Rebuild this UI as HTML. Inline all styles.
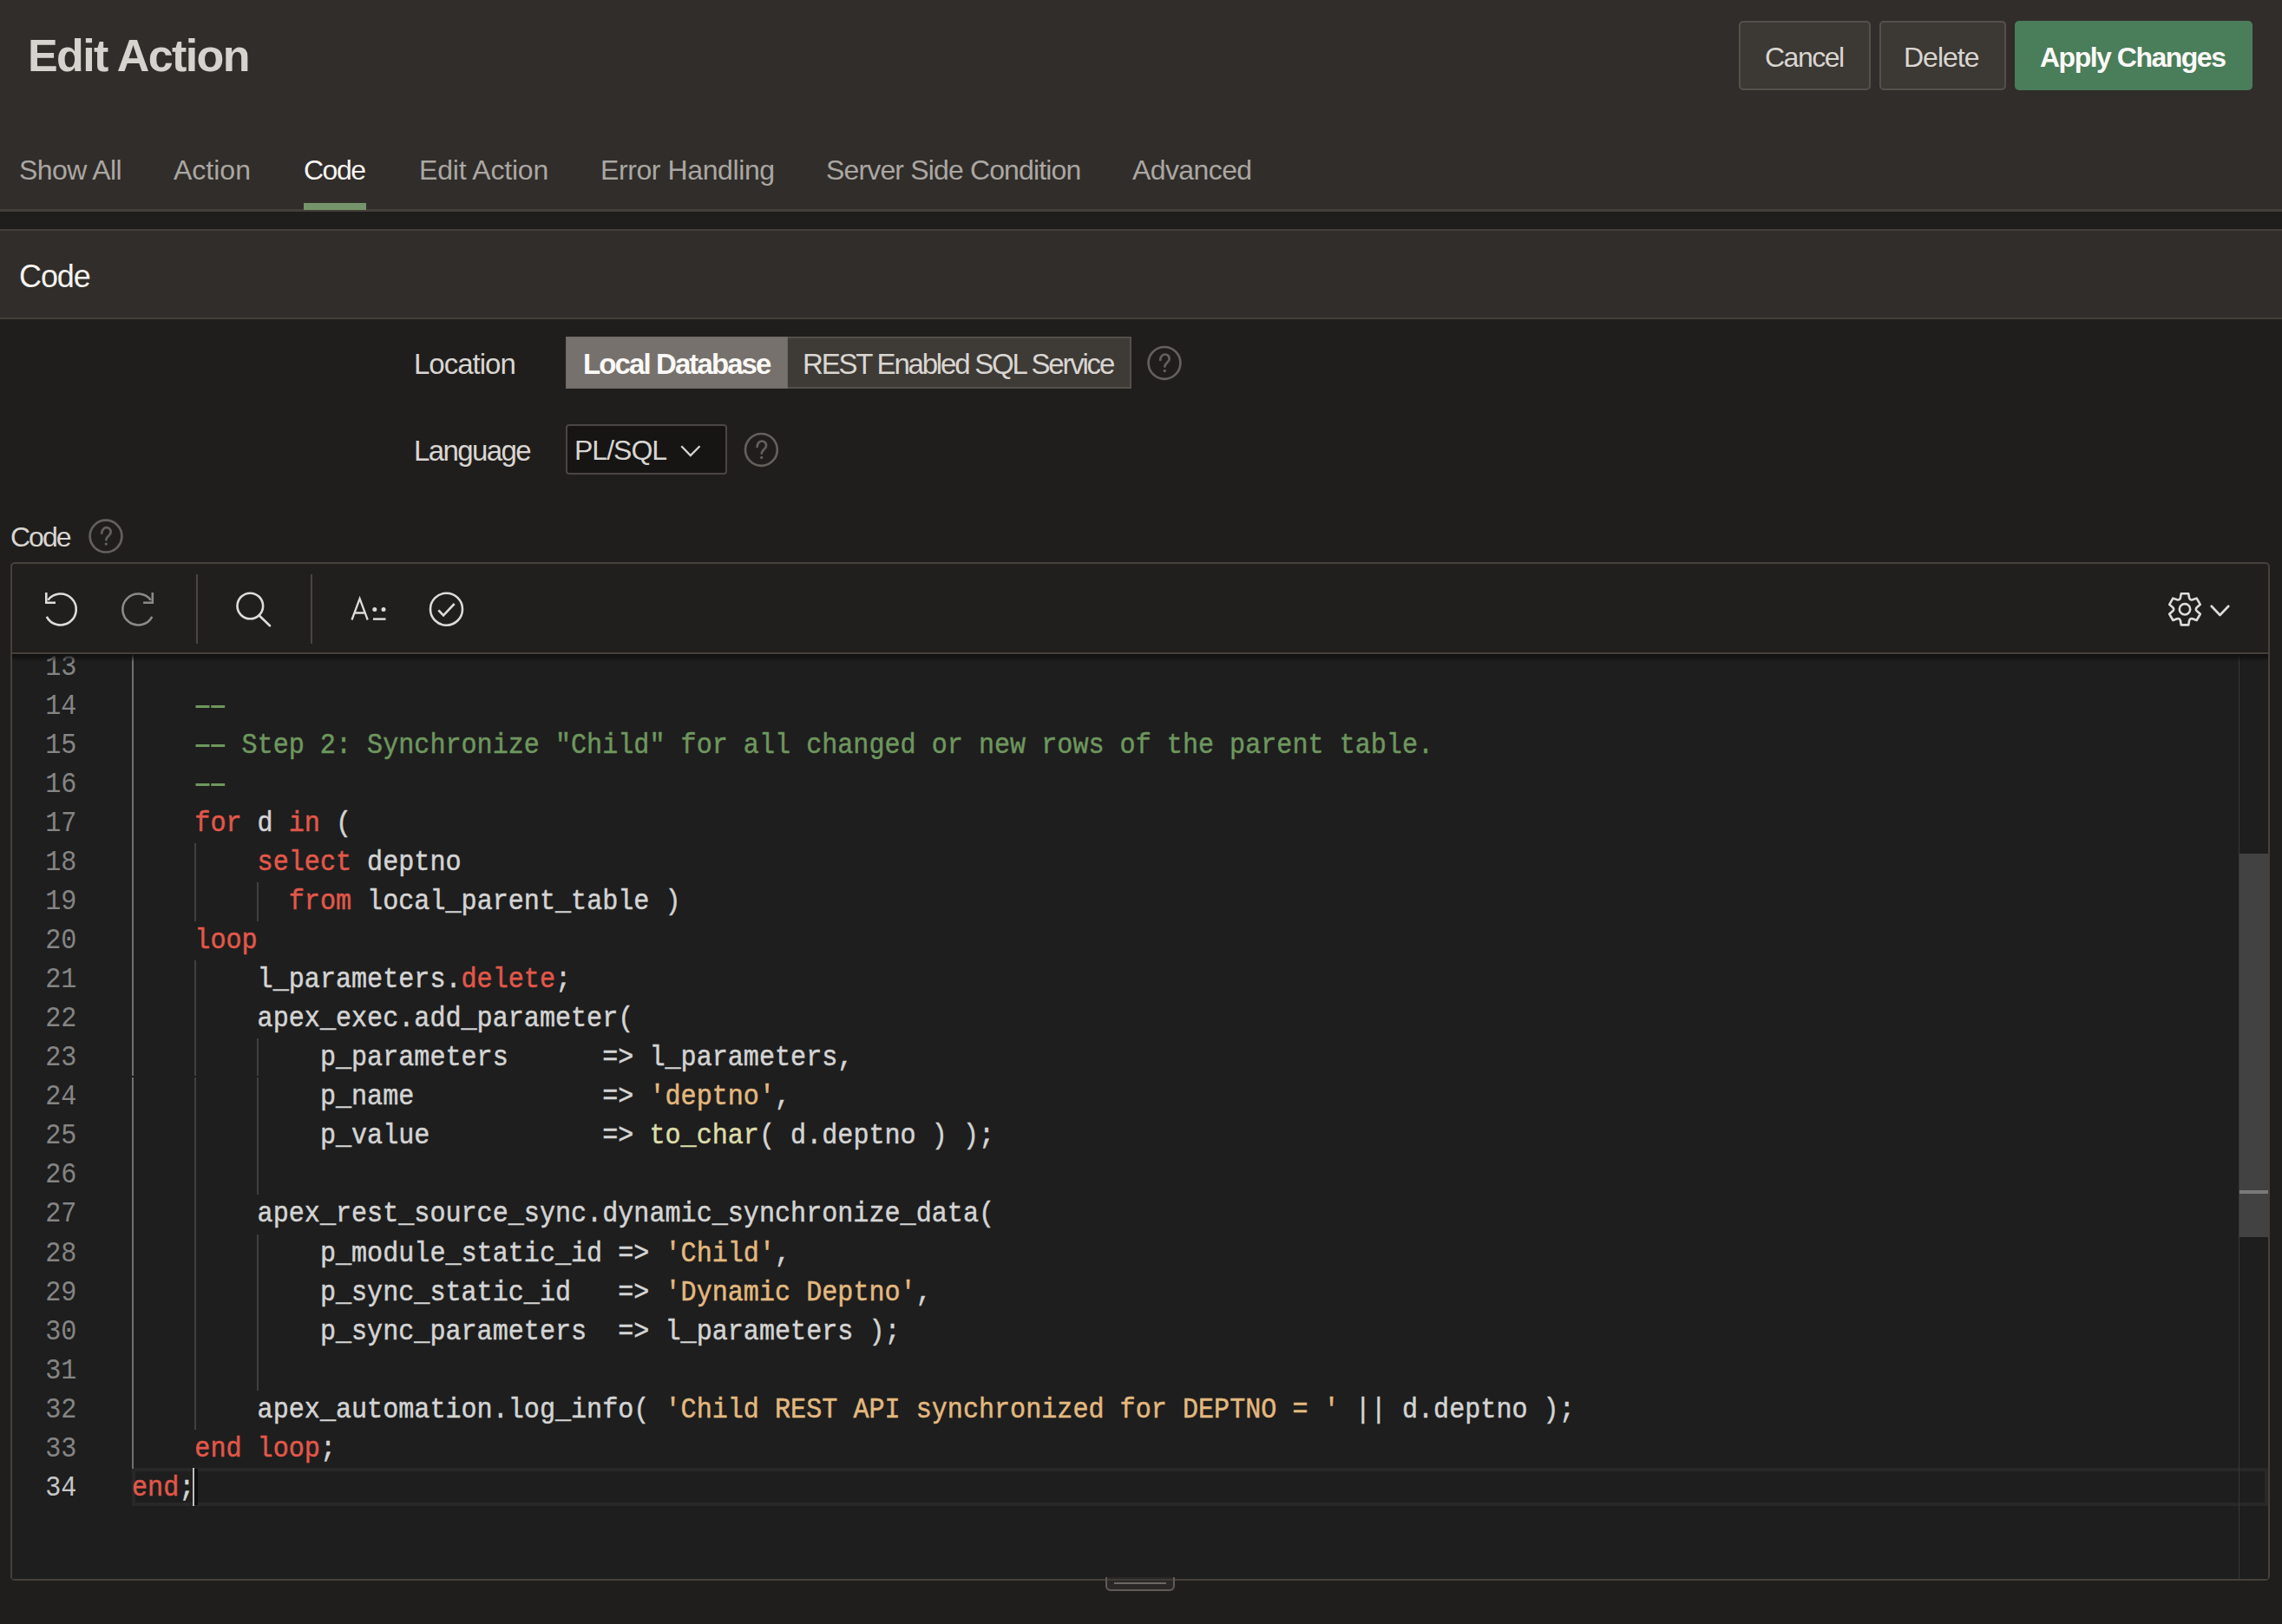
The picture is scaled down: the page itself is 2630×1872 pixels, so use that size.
<!DOCTYPE html>
<html><head><meta charset="utf-8">
<style>
*{box-sizing:border-box;margin:0;padding:0}
html,body{width:2630px;height:1872px;overflow:hidden;background:#201e1c;font-family:"Liberation Sans",sans-serif;}
.abs{position:absolute}
#hdr{position:absolute;left:0;top:0;width:2630px;height:244px;background:#312d2a;border-bottom:3px solid #433f39}
.t{position:absolute;white-space:pre;line-height:1}
.btn{position:absolute;top:24px;height:80px;border-radius:5px}
.gray{background:#3c3834;border:2px solid #55504b}
.tab{color:#aaa7a3;font-size:32px;letter-spacing:-0.6px}
#rh{position:absolute;left:0;top:264px;width:2630px;height:104px;background:#312d2a;border-top:2px solid #433f39;border-bottom:2px solid #433f39}
.lbl{color:#d9d6d2;font-size:32px;letter-spacing:-0.5px}
.help{position:absolute;width:40px;height:40px;border:2px solid #5f5b57;border-radius:50%}
#ed{position:absolute;left:12px;top:648px;width:2604px;height:1174px;border:2px solid #45413b;border-radius:5px;background:#201f1d}
#tb{position:absolute;left:0;top:0;width:2600px;height:104px;border-bottom:2px solid #45413b}
#code{position:absolute;left:0;top:104px;width:2600px;height:1066px;background:#1e1e1e;overflow:hidden;--x0:138px}
.ln{position:absolute;left:0;width:84px;height:45px;line-height:45px;padding-top:0px;text-align:right;font-family:"Liberation Mono",monospace;font-size:34px;transform:scaleX(0.8858);transform-origin:0 0;color:#858585;white-space:pre}
.ln.act{color:#c6c6c6}
.cl{position:absolute;left:var(--x0);height:45px;line-height:45px;padding-top:0px;font-family:"Liberation Mono",monospace;font-size:34px;transform:scaleX(0.8858);transform-origin:0 0;color:#d4d4d4;-webkit-text-stroke:0.5px currentColor;white-space:pre}
.k{color:#e2584a}.c{color:#6e975e}.s{color:#e3b97f}.f{color:#dcdcaa}
.dsh{display:inline-block;width:20.4px;height:45px;vertical-align:top;position:relative;color:transparent;-webkit-text-stroke:0}
.dsh::after{content:"";position:absolute;left:1.1px;right:1.1px;top:21.5px;height:3px;background:#6e975e}
.g{position:absolute;width:2px;background:#404040}
.g.ga{background:#707070}
</style></head>
<body>
<div id="hdr">
  <div class="t" style="left:32px;top:38px;font-size:52px;font-weight:bold;color:#d6d3cf;letter-spacing:-1.6px">Edit Action</div>
  <div class="btn gray" style="left:2004px;width:152px"></div>
  <div class="t" style="left:2034px;top:50px;font-size:32px;color:#d9d6d2;letter-spacing:-1.5px">Cancel</div>
  <div class="btn gray" style="left:2166px;width:146px"></div>
  <div class="t" style="left:2194px;top:50px;font-size:32px;color:#d9d6d2;letter-spacing:-1.0px">Delete</div>
  <div class="btn" style="left:2322px;width:274px;background:#4a7d5a"></div>
  <div class="t" style="left:2351px;top:50px;font-size:32px;font-weight:bold;color:#fbf9f7;letter-spacing:-1.5px">Apply Changes</div>

  <div class="t tab" style="left:22px;top:180px">Show All</div>
  <div class="t tab" style="left:200px;top:180px;letter-spacing:0px">Action</div>
  <div class="t tab" style="left:350px;top:180px;color:#f7f5f3;letter-spacing:-1.5px">Code</div>
  <div class="t tab" style="left:483px;top:180px;letter-spacing:-0.2px">Edit Action</div>
  <div class="t tab" style="left:692px;top:180px;letter-spacing:-0.4px">Error Handling</div>
  <div class="t tab" style="left:952px;top:180px;letter-spacing:-0.85px">Server Side Condition</div>
  <div class="t tab" style="left:1305px;top:180px">Advanced</div>
  <div class="abs" style="left:350px;top:234px;width:72px;height:8px;background:#76946b"></div>
</div>
<div id="rh">
  <div class="t" style="left:22px;top:35px;font-size:36px;color:#f5f3f0;letter-spacing:-1.1px">Code</div>
</div>

<!-- form -->
<div class="t lbl" style="left:477px;top:403px;font-size:33px;letter-spacing:-1px">Location</div>
<div class="abs" style="left:652px;top:388px;width:652px;height:60px;border:2px solid #55504b;background:#3e3a36"></div>
<div class="abs" style="left:652px;top:388px;width:256px;height:60px;background:#76716c;box-shadow:inset 0 0 0 1px #6e6964"></div>
<div class="t" style="left:672px;top:403px;font-size:33px;font-weight:bold;color:#fbf9f7;letter-spacing:-1.9px">Local Database</div>
<div class="t" style="left:925px;top:403px;font-size:33px;color:#d9d6d2;letter-spacing:-2.2px">REST Enabled SQL Service</div>

<div class="t lbl" style="left:477px;top:503px;font-size:33px;letter-spacing:-1.6px">Language</div>
<div class="abs" style="left:652px;top:489px;width:186px;height:58px;border:2px solid #4a4643;border-radius:4px;background:#161514"></div>
<div class="t" style="left:662px;top:503px;font-size:32px;color:#d9d6d2;letter-spacing:-1px">PL/SQL</div>

<div class="t lbl" style="left:12px;top:603px;letter-spacing:-2px">Code</div>

<div id="ed">
  <div id="tb"></div>
  <div id="code">
<div class="abs" style="left:138px;top:938px;width:2462px;height:44px;border:4px solid #282828;border-right:4px solid #282828"></div>
<div class="ln" style="top:-7.50px">13</div>
<div class="ln" style="top:37.57px">14</div>
<div class="ln" style="top:82.64px">15</div>
<div class="ln" style="top:127.71px">16</div>
<div class="ln" style="top:172.78px">17</div>
<div class="ln" style="top:217.85px">18</div>
<div class="ln" style="top:262.92px">19</div>
<div class="ln" style="top:307.99px">20</div>
<div class="ln" style="top:353.06px">21</div>
<div class="ln" style="top:398.13px">22</div>
<div class="ln" style="top:443.20px">23</div>
<div class="ln" style="top:488.27px">24</div>
<div class="ln" style="top:533.34px">25</div>
<div class="ln" style="top:578.41px">26</div>
<div class="ln" style="top:623.48px">27</div>
<div class="ln" style="top:668.55px">28</div>
<div class="ln" style="top:713.62px">29</div>
<div class="ln" style="top:758.69px">30</div>
<div class="ln" style="top:803.76px">31</div>
<div class="ln" style="top:848.83px">32</div>
<div class="ln" style="top:893.90px">33</div>
<div class="ln act" style="top:938.97px">34</div>
<div class="cl" style="top:-7.50px"></div>
<div class="cl" style="top:37.57px">    <span class="c"><span class="dsh">-</span><span class="dsh">-</span></span></div>
<div class="cl" style="top:82.64px">    <span class="c"><span class="dsh">-</span><span class="dsh">-</span> Step 2: Synchronize &quot;Child&quot; for all changed or new rows of the parent table.</span></div>
<div class="cl" style="top:127.71px">    <span class="c"><span class="dsh">-</span><span class="dsh">-</span></span></div>
<div class="cl" style="top:172.78px">    <span class="k">for</span> d <span class="k">in</span> (</div>
<div class="cl" style="top:217.85px">        <span class="k">select</span> deptno</div>
<div class="cl" style="top:262.92px">          <span class="k">from</span> local_parent_table )</div>
<div class="cl" style="top:307.99px">    <span class="k">loop</span></div>
<div class="cl" style="top:353.06px">        l_parameters.<span class="k">delete</span>;</div>
<div class="cl" style="top:398.13px">        apex_exec.add_parameter(</div>
<div class="cl" style="top:443.20px">            p_parameters      =&gt; l_parameters,</div>
<div class="cl" style="top:488.27px">            p_name            =&gt; <span class="s">&#x27;deptno&#x27;</span>,</div>
<div class="cl" style="top:533.34px">            p_value           =&gt; <span class="f">to_char</span>( d.deptno ) );</div>
<div class="cl" style="top:578.41px"></div>
<div class="cl" style="top:623.48px">        apex_rest_source_sync.dynamic_synchronize_data(</div>
<div class="cl" style="top:668.55px">            p_module_static_id =&gt; <span class="s">&#x27;Child&#x27;</span>,</div>
<div class="cl" style="top:713.62px">            p_sync_static_id   =&gt; <span class="s">&#x27;Dynamic Deptno&#x27;</span>,</div>
<div class="cl" style="top:758.69px">            p_sync_parameters  =&gt; l_parameters );</div>
<div class="cl" style="top:803.76px"></div>
<div class="cl" style="top:848.83px">        apex_automation.log_info( <span class="s">&#x27;Child REST API synchronized for DEPTNO = &#x27;</span> || d.deptno );</div>
<div class="cl" style="top:893.90px">    <span class="k">end</span> <span class="k">loop</span>;</div>
<div class="cl" style="top:938.97px"><span class="k">end</span>;</div>
<div class="g ga" style="left:calc(var(--x0) + 0px);top:-7.50px;height:946.47px"></div>
<div class="g" style="left:calc(var(--x0) + 72px);top:217.85px;height:90.14px"></div>
<div class="g" style="left:calc(var(--x0) + 72px);top:353.06px;height:540.84px"></div>
<div class="g" style="left:calc(var(--x0) + 144px);top:262.92px;height:45.07px"></div>
<div class="g" style="left:calc(var(--x0) + 144px);top:443.20px;height:180.28px"></div>
<div class="g" style="left:calc(var(--x0) + 144px);top:668.55px;height:180.28px"></div>
<div class="abs" style="left:130px;top:486px;width:200px;height:2px;background:#1e1e1e"></div>
<div class="abs" style="left:208px;top:938px;width:2px;height:44px;background:#bdbdbd"></div><div class="abs" style="left:210px;top:939px;width:3.5px;height:42px;background:#0e0e0e"></div>
</div>
</div>

<!-- overlay: icons, scrollbar, cursor -->
<div class="abs" style="left:2580px;top:754px;width:1px;height:1066px;background:#383838"></div>
<div class="abs" style="left:2581px;top:984px;width:33px;height:442px;background:#424242"></div>
<div class="abs" style="left:2581px;top:1372px;width:33px;height:4px;background:#7a7a7a"></div>
<div class="abs" style="left:14px;top:754px;width:2600px;height:9px;background:linear-gradient(#0e0e0e,rgba(14,14,14,0))"></div>
<div class="abs" style="left:1274px;top:1818px;width:80px;height:16px;background:#2a2826;border:2px solid #5e5b58;border-top:none;border-radius:0 0 6px 6px"></div>
<div class="abs" style="left:1276px;top:1820px;width:76px;height:2px;background:#3f3b37"></div>
<div class="abs" style="left:1284px;top:1824px;width:60px;height:2px;background:#6b6865"></div>
<svg class="abs" style="left:0;top:0" width="2630" height="1872" viewBox="0 0 2630 1872">
 <g fill="none" stroke-width="2.6">
  <g stroke="#dcdcdc"><path d="M53.8,710.8 A18,18 0 1 0 55.3,691.8"/><path d="M53.3,683 L53.3,694.8 L64,694.8"/></g>
  <g stroke="#8a8a8a" transform="translate(229.1,0) scale(-1,1)"><path d="M53.8,710.8 A18,18 0 1 0 55.3,691.8"/><path d="M53.3,683 L53.3,694.8 L64,694.8"/></g>
  <g stroke="#dcdcdc" stroke-linecap="round"><circle cx="288.3" cy="698.5" r="14.8"/><path d="M299,709.7 L311,721.3"/></g>
  <g stroke="#dcdcdc" stroke-width="2.3"><path d="M405.5,714.5 L414.6,690 L423.7,714.5 M408,706.5 L421.5,706.5"/><path d="M430,713.6 L444.5,713.6" stroke-width="2.5"/></g>
  <g stroke="#dcdcdc"><circle cx="514.5" cy="702.2" r="18.5"/><path d="M505.3,703.3 L511,709.3 L523.7,696"/></g>
  <g stroke="#dcdcdc" stroke-linejoin="round"><path transform="translate(2518,702.3)" d="M-5.09,-13.26 L-4.18,-18.12 L4.18,-18.12 L5.09,-13.26 Q5.80,-10.04 8.94,-11.04 L13.60,-12.69 L17.79,-5.44 L14.03,-2.22 Q11.59,0.00 14.03,2.22 L17.79,5.44 L13.60,12.69 L8.94,11.04 Q5.80,10.04 5.09,13.26 L4.18,18.12 L-4.18,18.12 L-5.09,13.26 Q-5.80,10.04 -8.94,11.04 L-13.60,12.69 L-17.79,5.44 L-14.03,2.22 Q-11.59,0.00 -14.03,-2.22 L-17.79,-5.44 L-13.60,-12.69 L-8.94,-11.04 Q-5.80,-10.04 -5.09,-13.26 Z"/><circle cx="2518" cy="702.3" r="6.2"/><path d="M2548,698 L2558.5,709 L2569,698"/></g>
  <path d="M785.3,514.2 L795.8,525 L806.5,514.2" stroke="#d4d4d4" stroke-width="2.3"/>
 </g>
 <g fill="#dcdcdc"><circle cx="431.8" cy="702.4" r="2.5"/><circle cx="442" cy="702.4" r="2.5"/></g>
 <rect x="226" y="662" width="2" height="80" fill="#4a4642"/>
 <rect x="358" y="662" width="2" height="80" fill="#4a4642"/>
 <g transform="translate(1342,418.4)"><circle r="18.4" fill="none" stroke="#63605d" stroke-width="2.7"/><path d="M-4.8,-3.4 C-4.8,-7.2 -2.2,-9.9 0.8,-9.9 C3.8,-9.9 5.7,-7.6 5.7,-4.8 C5.7,-1.8 3.4,-0.6 2,0.8 C0.9,1.9 0.4,2.9 0.4,4.2" fill="none" stroke="#63605d" stroke-width="2.7" stroke-linecap="round"/><circle cx="0.3" cy="9" r="1.7" fill="#63605d"/></g>
 <g transform="translate(877.4,518.4)"><circle r="18.4" fill="none" stroke="#63605d" stroke-width="2.7"/><path d="M-4.8,-3.4 C-4.8,-7.2 -2.2,-9.9 0.8,-9.9 C3.8,-9.9 5.7,-7.6 5.7,-4.8 C5.7,-1.8 3.4,-0.6 2,0.8 C0.9,1.9 0.4,2.9 0.4,4.2" fill="none" stroke="#63605d" stroke-width="2.7" stroke-linecap="round"/><circle cx="0.3" cy="9" r="1.7" fill="#63605d"/></g>
 <g transform="translate(122,618.1)"><circle r="18.4" fill="none" stroke="#63605d" stroke-width="2.7"/><path d="M-4.8,-3.4 C-4.8,-7.2 -2.2,-9.9 0.8,-9.9 C3.8,-9.9 5.7,-7.6 5.7,-4.8 C5.7,-1.8 3.4,-0.6 2,0.8 C0.9,1.9 0.4,2.9 0.4,4.2" fill="none" stroke="#63605d" stroke-width="2.7" stroke-linecap="round"/><circle cx="0.3" cy="9" r="1.7" fill="#63605d"/></g>
</svg>
</body></html>
